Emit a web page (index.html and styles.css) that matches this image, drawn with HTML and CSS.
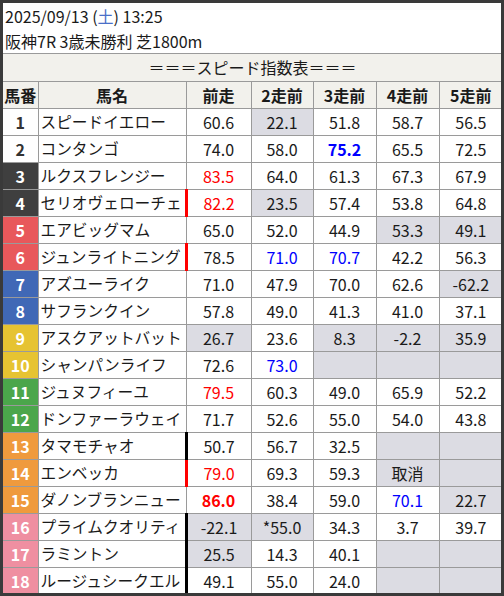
FILE: index.html
```html
<!DOCTYPE html>
<html lang="ja">
<head>
<meta charset="utf-8">
<title>スピード指数表</title>
<link rel="stylesheet" href="styles.css">
</head>
<body>
<div class="card">
  <div class="info">
    <div>2025/09/13 (<span class="sat">土</span>) 13:25</div>
    <div>阪神7R 3歳未勝利 芝1800m</div>
  </div>
  <table class="speed">
    <colgroup>
      <col class="c-no"><col class="c-name"><col class="c-r1"><col class="c-r2"><col class="c-r"><col class="c-r"><col class="c-r">
    </colgroup>
    <thead>
      <tr class="title-row"><th colspan="7">＝＝＝スピード指数表＝＝＝</th></tr>
      <tr class="head-row"><th>馬番</th><th>馬名</th><th>前走</th><th>2走前</th><th>3走前</th><th>4走前</th><th>5走前</th></tr>
    </thead>
    <tbody>
      <tr><td class="no g1">1</td><td class="name">スピードイエロー</td><td>60.6</td><td class="gr">22.1</td><td>51.8</td><td>58.7</td><td>56.5</td></tr>
      <tr><td class="no g1">2</td><td class="name">コンタンゴ</td><td>74.0</td><td>58.0</td><td class="blue bold">75.2</td><td>65.5</td><td>72.5</td></tr>
      <tr><td class="no g2">3</td><td class="name">ルクスフレンジー</td><td class="red">83.5</td><td>64.0</td><td>61.3</td><td>67.3</td><td>67.9</td></tr>
      <tr><td class="no g2">4</td><td class="name">セリオヴェローチェ</td><td class="red bar-red">82.2</td><td class="gr">23.5</td><td>57.4</td><td>53.8</td><td>64.8</td></tr>
      <tr><td class="no g3">5</td><td class="name">エアビッグマム</td><td>65.0</td><td>52.0</td><td>44.9</td><td class="gr">53.3</td><td class="gr">49.1</td></tr>
      <tr><td class="no g3">6</td><td class="name">ジュンライトニング</td><td class="bar-red">78.5</td><td class="blue">71.0</td><td class="blue">70.7</td><td>42.2</td><td>56.3</td></tr>
      <tr><td class="no g4">7</td><td class="name">アズユーライク</td><td>71.0</td><td>47.9</td><td>70.0</td><td>62.6</td><td class="gr">-62.2</td></tr>
      <tr><td class="no g4">8</td><td class="name">サフランクイン</td><td>57.8</td><td>49.0</td><td>41.3</td><td>41.0</td><td>37.1</td></tr>
      <tr><td class="no g5">9</td><td class="name">アスクアットバット</td><td class="gr">26.7</td><td>23.6</td><td class="gr">8.3</td><td class="gr">-2.2</td><td class="gr">35.9</td></tr>
      <tr><td class="no g5">10</td><td class="name">シャンパンライフ</td><td>72.6</td><td class="blue">73.0</td><td class="gr"></td><td class="gr"></td><td class="gr"></td></tr>
      <tr><td class="no g6">11</td><td class="name">ジュヌフィーユ</td><td class="red">79.5</td><td>60.3</td><td>49.0</td><td>65.9</td><td>52.2</td></tr>
      <tr><td class="no g6">12</td><td class="name">ドンファーラウェイ</td><td>71.7</td><td>52.6</td><td>55.0</td><td>54.0</td><td>43.8</td></tr>
      <tr><td class="no g7">13</td><td class="name">タマモチャオ</td><td class="bar-black">50.7</td><td>56.7</td><td>32.5</td><td class="gr"></td><td class="gr"></td></tr>
      <tr><td class="no g7">14</td><td class="name">エンベッカ</td><td class="red bar-red">79.0</td><td>69.3</td><td>59.3</td><td class="gr">取消</td><td class="gr"></td></tr>
      <tr><td class="no g7">15</td><td class="name">ダノンブランニュー</td><td class="red bold">86.0</td><td>38.4</td><td>59.0</td><td class="blue">70.1</td><td class="gr">22.7</td></tr>
      <tr><td class="no g8">16</td><td class="name">プライムクオリティ</td><td class="gr bar-black">-22.1</td><td class="gr">*55.0</td><td>34.3</td><td>3.7</td><td>39.7</td></tr>
      <tr><td class="no g8">17</td><td class="name">ラミントン</td><td class="gr bar-black">25.5</td><td>14.3</td><td>40.1</td><td class="gr"></td><td class="gr"></td></tr>
      <tr><td class="no g8">18</td><td class="name">ルージュシークエル</td><td class="bar-black">49.1</td><td>55.0</td><td>24.0</td><td class="gr"></td><td class="gr"></td></tr>
    </tbody>
  </table>
</div>
</body>
</html>
```
FILE: styles.css
```css
html, body {
  margin: 0;
  padding: 0;
  background: #ffffff;
}
body {
  font-family: "Noto Sans CJK JP", "Noto Sans", sans-serif;
  color: #1a1a1a;
}
.card {
  width: 504px;
  height: 596px;
  box-sizing: border-box;
  border: 3px solid #3a3a3a;
  background: #ffffff;
  overflow: hidden;
}
.info {
  height: 51px;
  box-sizing: border-box;
  padding: 1px 0 0 2px;
  border-bottom: 1px solid #9a9a9a;
  font-size: 16px;
  line-height: 24.5px;
  white-space: nowrap;
}
.sat {
  color: #4a6fc8;
}
.speed {
  width: 498px;
  table-layout: fixed;
  border-collapse: collapse;
  border-style: hidden;
  font-size: 16px;
  line-height: 1;
}
.c-no { width: 35px; }
.c-name { width: 148px; }
.c-r1 { width: 65px; }
.c-r2 { width: 62px; }
.c-r { width: 63px; }
.speed tr {
  height: 27px;
}
.speed th,
.speed td {
  border: 1px solid #9a9a9a;
  padding: 0;
  text-align: center;
  vertical-align: middle;
  white-space: nowrap;
  overflow: hidden;
}
.title-row th {
  background: #f2f1ec;
  font-weight: normal;
}
.head-row th {
  background: #f2f1ec;
  font-weight: bold;
}
.speed td.name {
  text-align: left;
  padding-left: 2px;
  font-size: 15.7px;
}
.speed td.no {
  font-weight: bold;
  color: #ffffff;
}
.g1 { background: #ffffff; color: #333333 !important; }
.g2 { background: #3f3f3f; }
.g3 { background: #e8585b; }
.g4 { background: #4068b6; }
.g5 { background: #e6c332; }
.g6 { background: #4ba64b; }
.g7 { background: #ef9a3d; }
.g8 { background: #ef8fa1; }
.speed td.gr {
  background: #dcdce3;
}
.red { color: #ff0000; }
.blue { color: #0000ff; }
.bold { font-weight: bold; }
.speed td.bar-red {
  border-left: 3px solid #ff0000;
}
.speed td.bar-black {
  border-left: 3px solid #000000;
}
```
